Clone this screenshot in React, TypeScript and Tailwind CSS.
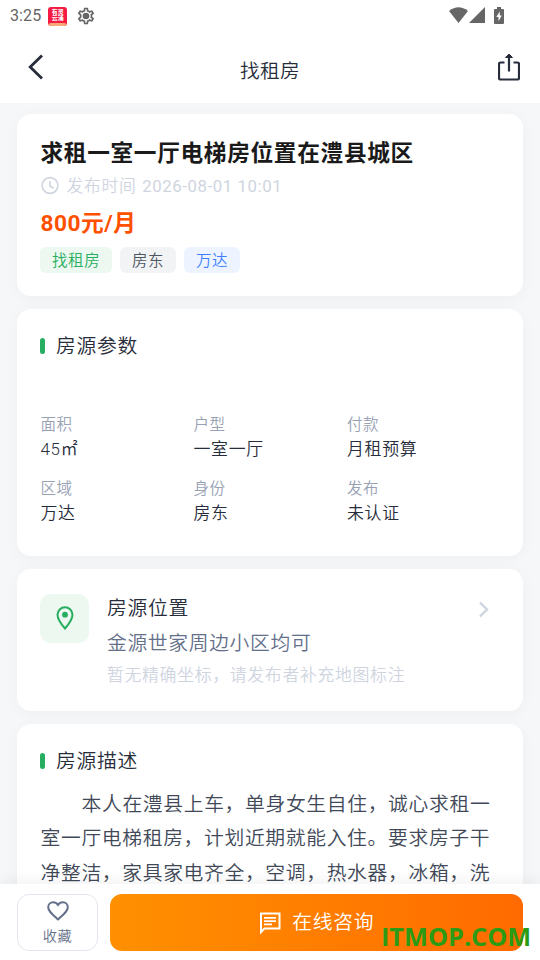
import type { ReactNode } from "react";

const params = [
  { label: "面积", value: "45㎡" },
  { label: "户型", value: "一室一厅" },
  { label: "付款", value: "月租预算" },
  { label: "区域", value: "万达" },
  { label: "身份", value: "房东" },
  { label: "发布", value: "未认证" },
];

const tags = [
  { text: "找租房", className: "bg-[#ecf8f0] text-[#27ae60]" },
  { text: "房东", className: "bg-[#f2f3f5] text-[#4e5563]" },
  { text: "万达", className: "bg-[#edf4ff] text-[#3f7fff]" },
];

const description = [
  "本人在澧县上车，单身女生自住，诚心求租一",
  "室一厅电梯租房，计划近期就能入住。要求房子干",
  "净整洁，家具家电齐全，空调，热水器，冰箱，洗",
];

function StatusBar() {
  return (
    <div className="flex h-8 shrink-0 items-center pl-[10px] pr-[35px] text-[#666]">
      <span className="font-[Roboto] text-[16px] font-normal tracking-[0.1px]">3:25</span>
      <div className="ml-[7px] flex h-[19px] w-[19px] flex-col items-center overflow-hidden rounded-[3px] bg-[#f51b43] pt-[2px] text-[6px] font-bold leading-[6.5px] text-white">
        <span>有灵</span>
        <span>云涌</span>
        <i className="mt-auto h-[3px] w-full rounded-t-full bg-[#f5a878]" />
      </div>
      <svg className="ml-[9px] h-[20px] w-[20px]" viewBox="0 0 24 24" fill="currentColor">
        <path d="M19.43 12.98c.04-.32.07-.64.07-.98s-.03-.66-.07-.98l2.11-1.65c.19-.15.24-.42.12-.64l-2-3.46a.5.5 0 0 0-.61-.22l-2.49 1c-.52-.4-1.08-.73-1.69-.98l-.38-2.65A.49.49 0 0 0 14 2h-4c-.25 0-.46.18-.49.42l-.38 2.65c-.61.25-1.17.59-1.69.98l-2.49-1a.5.5 0 0 0-.61.22l-2 3.46c-.13.22-.07.49.12.64l2.11 1.65c-.04.32-.07.65-.07.98s.03.66.07.98l-2.11 1.65c-.19.15-.24.42-.12.64l2 3.46c.12.22.39.3.61.22l2.49-1c.52.4 1.08.73 1.69.98l.38 2.65c.03.24.24.42.49.42h4c.25 0 .46-.18.49-.42l.38-2.65c.61-.25 1.17-.59 1.69-.98l2.49 1c.23.09.49 0 .61-.22l2-3.46a.5.5 0 0 0-.12-.64zm-1.98-1.71c.04.31.05.52.05.73s-.02.43-.05.73l-.14 1.13.89.7 1.08.84-.7 1.21-1.27-.51-1.04-.42-.9.68c-.43.32-.84.56-1.25.73l-1.06.43-.16 1.13-.2 1.35h-1.4l-.19-1.35-.16-1.13-1.06-.43c-.43-.18-.83-.41-1.23-.71l-.91-.7-1.06.43-1.27.51-.7-1.21 1.08-.84.89-.7-.14-1.13c-.03-.31-.05-.54-.05-.74s.02-.43.05-.73l.14-1.13-.89-.7-1.08-.84.7-1.21 1.27.51 1.04.42.9-.68c.43-.32.84-.56 1.25-.73l1.06-.43.16-1.13.2-1.35h1.39l.19 1.35.16 1.13 1.06.43c.43.18.83.41 1.23.71l.91.7 1.06-.43 1.27-.51.7 1.21-1.07.85-.89.7z" />
        <circle cx="12" cy="12" r="4" />
      </svg>
      <div className="ml-auto flex items-center pb-[2px]">
        <svg width="19" height="16" viewBox="0 0 19 16" fill="currentColor">
          <path d="M0 4Q9.5-3.5 19 4L9.5 16Z" />
        </svg>
        <svg className="ml-[1.5px]" width="16" height="16" viewBox="0 0 16 16" fill="currentColor">
          <path d="M16 0v16H0Z" />
        </svg>
        <svg className="ml-[9px] mr-[1px]" width="10" height="17" viewBox="0 0 10 17">
          <path d="M3 0h4v2h2q1 0 1 1v13q0 1-1 1H1q-1 0-1-1V3q0-1 1-1h2Z" fill="currentColor" />
          <path d="M5.8 4.5 2.3 10h2.2v4.2L7.8 8.6H5.8Z" fill="#fff" />
        </svg>
      </div>
    </div>
  );
}

function Header() {
  return (
    <header className="flex h-[70.5px] shrink-0 items-center justify-between pl-[28px] pr-[20px] text-[#272d3a]">
      <svg className="-mt-[1px]" width="16" height="26" viewBox="0 0 16 26" fill="none" stroke="currentColor" strokeWidth="2.8">
        <path d="M14 1.5 2.2 13 14 24.5" />
      </svg>
      <h1 className="mr-[2px] pt-[9px] text-[19.7px] tracking-[0.3px]">找租房</h1>
      <svg className="-mt-[1px]" width="22" height="28" viewBox="0 0 22 28" fill="none" stroke="currentColor" strokeWidth="2.2">
        <path d="M6.5 9.5h-4Q1 9.5 1 11v14q0 1.5 1.5 1.5h17Q21 26.5 21 25V11q0-1.5-1.5-1.5h-4" />
        <path d="M11 18.5V3" />
        <path d="m7.5 4.5 3.5-3.5 3.5 3.5Z" fill="currentColor" strokeWidth="1" />
      </svg>
    </header>
  );
}

function Card({ className, children }: { className: string; children: ReactNode }) {
  return (
    <section className={`shrink-0 rounded-[14px] bg-white pl-[23.5px] pr-6 shadow-[0_3px_16px_rgba(0,0,0,0.035)] ${className}`}>
      {children}
    </section>
  );
}

function SectionTitle({ children }: { children: ReactNode }) {
  return (
    <div className="flex items-center">
      <i className="-ml-[0.5px] h-[16.5px] w-[5px] rounded-full bg-[#27ae60]" />
      <h2 className="ml-[11px] pt-[1px] text-[19.8px] leading-[30px] tracking-[0.7px] text-[#272d3a]">{children}</h2>
    </div>
  );
}

export default function App() {
  return (
    <div className="relative flex h-[960px] w-[540px] flex-col overflow-hidden bg-white font-['Roboto','Noto_Sans_CJK_SC',sans-serif] font-[350]">
      <StatusBar />
      <Header />

      <main className="flex min-h-0 flex-1 flex-col gap-[12.5px] overflow-hidden bg-[#f6f7f9] px-[17px] pt-[11.5px]">
        <Card className="h-[182px] pt-[23px]">
          <h2 className="text-[22.7px] font-bold leading-[34px] tracking-[0.65px] text-[#1a1a1a]">
            求租一室一厅电梯房位置在澧县城区
          </h2>
          <div className="mt-[1px] flex h-[28px] items-center text-[16.8px] tracking-[0.7px] text-[#cfd5df]">
            <svg className="-ml-[1px] mr-[7px]" width="20" height="20" viewBox="0 0 20 20" fill="none" stroke="currentColor" strokeWidth="1.6">
              <circle cx="10" cy="9.5" r="7.9" />
              <path d="M10 5v5l3.5 2.2" />
            </svg>
            <span className="pt-[1px]">
              发布时间 <span className="ml-[1px] font-normal tracking-[0.58px]">2026-08-01 10:01</span>
            </span>
          </div>
          <div className="mt-[6.5px] text-[22.7px] font-bold leading-[34px] tracking-[0.5px] text-[#ff5000]">800元/月</div>
          <div className="-ml-[0.5px] mt-[6.5px] flex gap-[8px]">
            {tags.map((tag) => (
              <span key={tag.text} className={`h-[26px] rounded-[6px] pl-[12px] pr-[11.7px] text-[15.5px] leading-[28px] tracking-[0.6px] ${tag.className}`}>
                {tag.text}
              </span>
            ))}
          </div>
        </Card>

        <Card className="h-[247.5px] pt-[22px]">
          <SectionTitle>房源参数</SectionTitle>
          <dl className="mt-[51.5px] grid grid-cols-[153px_153.5px_1fr] gap-y-[14px]">
            {params.map((item) => (
              <div key={item.label} className="h-[50px]">
                <dt className="text-[15.5px] leading-[24px] tracking-[0.6px] text-[#98a2b5]">{item.label}</dt>
                <dd className="text-[16.9px] leading-[24.5px] tracking-[0.7px] text-[#272d3a]">{item.value}</dd>
              </div>
            ))}
          </dl>
        </Card>

        <Card className="flex h-[142.5px] pt-[25px]">
          <div className="-ml-[0.5px] flex h-[49px] w-[49px] items-center justify-center rounded-[11px] bg-[#ecf8f0] text-[#27ae60]">
            <svg width="18" height="24" viewBox="0 0 18 24" fill="none" stroke="currentColor" strokeWidth="2">
              <path d="M9 22.5C5.2 18.2 1.5 13.3 1.5 8.8a7.5 7.5 0 0 1 15 0c0 4.5-3.7 9.4-7.5 13.7Z" />
              <circle cx="9" cy="8.7" r="2.9" fill="currentColor" stroke="none" />
            </svg>
          </div>
          <div className="ml-[18px] flex-1">
            <h2 className="text-[19.8px] leading-[30px] tracking-[0.7px] text-[#272d3a]">房源位置</h2>
            <p className="mt-[5px] text-[19.8px] leading-[30px] tracking-[0.65px] text-[#64708a]">金源世家周边小区均可</p>
            <p className="mt-[3px] text-[16.9px] leading-[26px] tracking-[0.65px] text-[#cfd5df]">暂无精确坐标，请发布者补充地图标注</p>
          </div>
          <svg className="mr-[10px] mt-[7px]" width="10" height="17" viewBox="0 0 10 17" fill="none" stroke="#cfd5df" strokeWidth="2.4">
            <path d="m1 1.5 7 7-7 7" />
          </svg>
        </Card>

        <Card className="h-[260px] pt-[22px]">
          <SectionTitle>房源描述</SectionTitle>
          <div className="mt-[11px] text-[19.8px] leading-[34.5px] tracking-[0.66px] text-[#414958]">
            {description.map((line, i) => (
              <p key={line} className={i === 0 ? "whitespace-nowrap indent-[41px]" : "whitespace-nowrap"}>
                {line}
              </p>
            ))}
          </div>
        </Card>
      </main>

      <footer className="relative flex h-[76px] shrink-0 gap-[11.5px] bg-white px-[17px] pt-[10px] shadow-[0_-4px_14px_rgba(0,0,0,0.05)]">
        <button className="flex h-[57px] w-[81px] flex-col items-center rounded-[12px] border border-[#e4e6ee] pt-[6px] text-[#64708a]">
          <svg width="22" height="20" viewBox="0 0 22 20" fill="none" stroke="currentColor" strokeWidth="2">
            <path d="M11 18.5 9.6 17.2C4.5 12.6 1.2 9.8 1.2 6.2A4.9 4.9 0 0 1 6.1 1.3c1.9 0 3.8 1 4.9 2.7 1.1-1.7 3-2.7 4.9-2.7a4.9 4.9 0 0 1 4.9 4.9c0 3.6-3.3 6.4-8.4 11Z" />
          </svg>
          <span className="mt-[4px] text-[14.2px] leading-[22px] tracking-[0.5px]">收藏</span>
        </button>
        <button className="flex h-[57px] flex-1 items-center justify-center rounded-[12px] bg-linear-to-r from-[#ff9000] to-[#ff6a00] text-[19.8px] tracking-[0.7px] text-white">
          <svg className="mr-[10px]" width="24" height="24" viewBox="0 0 24 24" fill="none" stroke="currentColor" strokeWidth="2">
            <path d="M3 21V2.5h18.500v15H6.500Z" />
            <path d="M6 6.8h12M6 10.100h12M6 13.400h8" strokeWidth="1.7" />
          </svg>
          在线咨询
        </button>
        <span className="absolute left-[381px] top-[35px] font-['Open_Sans'] text-[25.3px] font-bold leading-[34px] text-[#2b9a14]">
          ITMOP.COM
        </span>
      </footer>
    </div>
  );
}
